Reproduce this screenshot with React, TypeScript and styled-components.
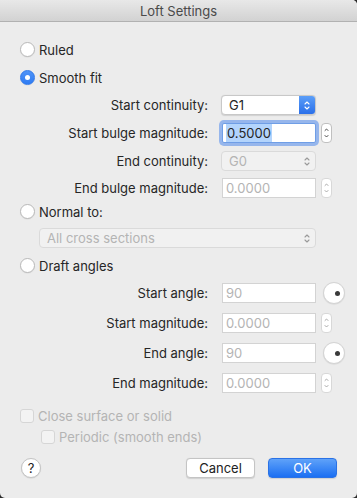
import React from 'react'
import styled, { createGlobalStyle } from 'styled-components'

const GlobalStyle = createGlobalStyle`
    html, body {
        margin: 0;
        padding: 0;
        background: #2b2b2b;
        width: 357px;
        height: 498px;
        overflow: hidden;
    }
    * {
        box-sizing: border-box;
    }
`;

const TEXT = '#262626';
const DISABLED = '#b4b4b4';
const FONT = `Inter, 'Liberation Sans', Arial, sans-serif`;

const Dialog = styled.div`
    width: 357px;
    height: 498px;
    background: #ececec;
    border-radius: 0 5px 5px 5px;
    overflow: hidden;
    font-family: ${FONT};
    font-size: 13px;
    color: ${TEXT};
    display: flex;
    flex-direction: column;
`;

const TitleBar = styled.div`
    height: 22px;
    flex-shrink: 0;
    display: flex;
    align-items: center;
    justify-content: center;
    background: linear-gradient(to bottom, #e8e8e8, #d2d2d2);
    border-bottom: 1px solid #b1b1b1;
    color: #4a4a4a;
    font-size: 13px;
`;

const Body = styled.div`
    padding: 0 20px;
    display: flex;
    flex-direction: column;
`;

const OptionRow = styled.label<{ $mt: number; $indent?: number; $disabled?: boolean }>`
    display: flex;
    align-items: center;
    gap: 4px;
    height: 15px;
    margin-top: ${p => p.$mt}px;
    margin-left: ${p => p.$indent || 0}px;
    color: ${p => (p.$disabled ? DISABLED : TEXT)};
`;

const Radio = styled.span<{ $checked?: boolean }>`
    width: 15px;
    height: 15px;
    border-radius: 50%;
    flex-shrink: 0;
    display: flex;
    align-items: center;
    justify-content: center;
    background: ${p => (p.$checked ? 'linear-gradient(to bottom, #4f93f7, #2f7cf3)' : '#fff')};
    border: 1px solid ${p => (p.$checked ? '#2f78ea' : '#b9b9b9')};
    box-shadow: 0 0.5px 1px rgba(0, 0, 0, 0.08);

    &::after {
        content: '';
        display: ${p => (p.$checked ? 'block' : 'none')};
        width: 5px;
        height: 5px;
        border-radius: 50%;
        background: #fff;
    }
`;

const Checkbox = styled.span`
    width: 14px;
    height: 14px;
    border-radius: 3px;
    flex-shrink: 0;
    background: #f3f3f3;
    border: 1px solid #d6d6d6;
`;

const FormRow = styled.div<{ $mt: number; $h?: number }>`
    display: grid;
    grid-template-columns: 188px 94px auto;
    column-gap: 14px;
    align-items: center;
    height: ${p => p.$h || 20}px;
    margin-top: ${p => p.$mt}px;
`;

const WideRow = styled.div<{ $mt: number }>`
    display: flex;
    align-items: center;
    height: 20px;
    margin-top: ${p => p.$mt}px;
    padding-left: 20px;
`;

const Label = styled.span`
    text-align: right;
    white-space: nowrap;
`;

const Control = styled.div`
    display: flex;
    align-items: center;
    grid-column: 2 / 4;
    gap: 4px;
`;

const Popup = styled.div<{ $disabled?: boolean; $width?: number }>`
    position: relative;
    width: ${p => p.$width || 95}px;
    height: 20px;
    margin-left: -1px;
    border-radius: 4px;
    background: ${p => (p.$disabled ? '#f1f1f1' : '#fff')};
    border: 1px solid ${p => (p.$disabled ? '#dadada' : '#c8c8c8')};
    box-shadow: ${p => (p.$disabled ? 'none' : '0 0.5px 1px rgba(0,0,0,0.12)')};
    color: ${p => (p.$disabled ? DISABLED : TEXT)};
    display: flex;
    align-items: center;
    padding-left: 7px;
    overflow: hidden;
`;

const PopupArrows = styled.span<{ $active?: boolean }>`
    position: absolute;
    right: 0;
    top: 0;
    bottom: 0;
    width: 16px;
    display: flex;
    align-items: center;
    justify-content: center;
    background: ${p => (p.$active ? 'linear-gradient(to bottom, #5b9ef8, #2a6fe9)' : 'transparent')};
    color: ${p => (p.$active ? '#fff' : '#9a9a9a')};
`;

const Field = styled.div<{ $focused?: boolean }>`
    width: 94px;
    height: 20px;
    background: #fff;
    border: 1px solid ${p => (p.$focused ? '#6f9ee6' : '#d3d3d3')};
    box-shadow: ${p => (p.$focused ? '0 0 0 3px rgba(104, 153, 236, 0.65)' : 'none')};
    border-radius: ${p => (p.$focused ? '2px' : '0')};
    color: ${p => (p.$focused ? TEXT : DISABLED)};
    display: flex;
    align-items: center;
    padding-left: 3px;
    font-size: 13px;
`;

const Selected = styled.span`
    background: #b3d4fc;
    padding: 1px 1px;
`;

const Stepper = styled.div<{ $disabled?: boolean }>`
    width: 11px;
    height: 20px;
    margin-left: 1px;
    border-radius: 4px;
    background: #fff;
    border: 1px solid ${p => (p.$disabled ? '#d8d8d8' : '#c0c0c0')};
    display: flex;
    align-items: center;
    justify-content: center;
    color: ${p => (p.$disabled ? '#a8a8a8' : '#4a4a4a')};
`;

const Dial = styled.div`
    width: 22px;
    height: 22px;
    border-radius: 50%;
    background: #fff;
    border: 1px solid #d4d4d4;
    box-shadow: 0 0.5px 1px rgba(0, 0, 0, 0.1);
    display: flex;
    align-items: center;
    justify-content: flex-end;
    padding-right: 4px;
    margin-left: 3px;

    &::after {
        content: '';
        width: 5px;
        height: 5px;
        border-radius: 50%;
        background: #3a3a3a;
    }
`;

const Footer = styled.div`
    display: flex;
    align-items: center;
    margin-top: 14px;
    margin-left: 1px;
`;

const HelpButton = styled.div`
    width: 20px;
    height: 20px;
    border-radius: 50%;
    background: #fff;
    border: 1px solid #c4c4c4;
    box-shadow: 0 0.5px 1px rgba(0, 0, 0, 0.12);
    display: flex;
    align-items: center;
    justify-content: center;
    font-size: 13px;
    color: #222;
    margin-right: auto;
`;

const Button = styled.div<{ $primary?: boolean }>`
    width: 69px;
    height: 20px;
    border-radius: 4px;
    display: flex;
    align-items: center;
    justify-content: center;
    font-size: 13px;
    background: ${p => (p.$primary ? 'linear-gradient(to bottom, #5fa2f9, #1b6ff2)' : '#fff')};
    color: ${p => (p.$primary ? '#fff' : '#222')};
    border: 1px solid ${p => (p.$primary ? '#2a72e6' : '#c4c4c4')};
    box-shadow: 0 0.5px 1px rgba(0, 0, 0, 0.12);
    margin-left: ${p => (p.$primary ? '13px' : '0')};
`;

const UpDown = () => (
    <svg width="6" height="11" viewBox="0 0 6 11" fill="none" stroke="currentColor" strokeWidth="1.1" strokeLinecap="round" strokeLinejoin="round">
        <path d="M1 4 L3 2 L5 4" />
        <path d="M1 7 L3 9 L5 7" />
    </svg>
);

const SmallUpDown = () => (
    <svg width="5" height="12" viewBox="0 0 5 12" fill="none" stroke="currentColor" strokeWidth="1" strokeLinecap="round" strokeLinejoin="round">
        <path d="M1 3.5 L2.5 2 L4 3.5" />
        <path d="M1 8.5 L2.5 10 L4 8.5" />
    </svg>
);

const App: React.FC = () => {
    return (
        <>
            <GlobalStyle />
            <Dialog>
                <TitleBar>Loft Settings</TitleBar>
                <Body>
                    <OptionRow $mt={20}>
                        <Radio />
                        Ruled
                    </OptionRow>
                    <OptionRow $mt={13}>
                        <Radio $checked />
                        Smooth fit
                    </OptionRow>

                    <FormRow $mt={10}>
                        <Label>Start continuity:</Label>
                        <Control>
                            <Popup>
                                G1
                                <PopupArrows $active><UpDown /></PopupArrows>
                            </Popup>
                        </Control>
                    </FormRow>
                    <FormRow $mt={8}>
                        <Label>Start bulge magnitude:</Label>
                        <Control>
                            <Field $focused><Selected>0.5000</Selected></Field>
                            <Stepper><SmallUpDown /></Stepper>
                        </Control>
                    </FormRow>
                    <FormRow $mt={8}>
                        <Label>End continuity:</Label>
                        <Control>
                            <Popup $disabled>
                                G0
                                <PopupArrows><UpDown /></PopupArrows>
                            </Popup>
                        </Control>
                    </FormRow>
                    <FormRow $mt={7}>
                        <Label>End bulge magnitude:</Label>
                        <Control>
                            <Field>0.0000</Field>
                            <Stepper $disabled><SmallUpDown /></Stepper>
                        </Control>
                    </FormRow>

                    <OptionRow $mt={6}>
                        <Radio />
                        Normal to:
                    </OptionRow>
                    <WideRow $mt={9}>
                        <Popup $disabled $width={277}>
                            All cross sections
                            <PopupArrows><UpDown /></PopupArrows>
                        </Popup>
                    </WideRow>

                    <OptionRow $mt={10}>
                        <Radio />
                        Draft angles
                    </OptionRow>
                    <FormRow $mt={9} $h={22}>
                        <Label>Start angle:</Label>
                        <Control>
                            <Field>90</Field>
                            <Dial />
                        </Control>
                    </FormRow>
                    <FormRow $mt={8} $h={22}>
                        <Label>Start magnitude:</Label>
                        <Control>
                            <Field>0.0000</Field>
                            <Stepper $disabled><SmallUpDown /></Stepper>
                        </Control>
                    </FormRow>
                    <FormRow $mt={8} $h={22}>
                        <Label>End angle:</Label>
                        <Control>
                            <Field>90</Field>
                            <Dial />
                        </Control>
                    </FormRow>
                    <FormRow $mt={8} $h={22}>
                        <Label>End magnitude:</Label>
                        <Control>
                            <Field>0.0000</Field>
                            <Stepper $disabled><SmallUpDown /></Stepper>
                        </Control>
                    </FormRow>

                    <OptionRow $mt={14} $disabled>
                        <Checkbox />
                        Close surface or solid
                    </OptionRow>
                    <OptionRow $mt={6} $indent={21} $disabled>
                        <Checkbox />
                        Periodic (smooth ends)
                    </OptionRow>

                    <Footer>
                        <HelpButton>?</HelpButton>
                        <Button>Cancel</Button>
                        <Button $primary>OK</Button>
                    </Footer>
                </Body>
            </Dialog>
        </>
    )
}

export default App
